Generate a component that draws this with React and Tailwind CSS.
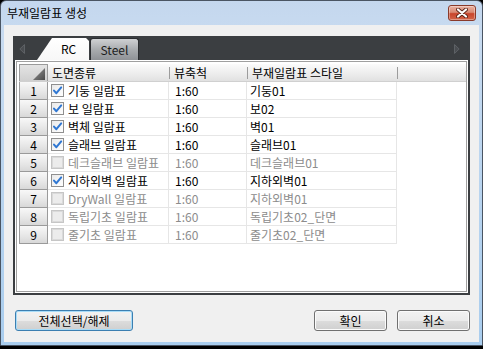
const rows = [
  { n: 1, on: true, name: '기둥 일람표', scale: '1:60', style: '기둥01' },
  { n: 2, on: true, name: '보 일람표', scale: '1:60', style: '보02' },
  { n: 3, on: true, name: '벽체 일람표', scale: '1:60', style: '벽01' },
  { n: 4, on: true, name: '슬래브 일람표', scale: '1:60', style: '슬래브01' },
  { n: 5, on: false, name: '데크슬래브 일람표', scale: '1:60', style: '데크슬래브01' },
  { n: 6, on: true, name: '지하외벽 일람표', scale: '1:60', style: '지하외벽01' },
  { n: 7, on: false, name: 'DryWall 일람표', scale: '1:60', style: '지하외벽01' },
  { n: 8, on: false, name: '독립기초 일람표', scale: '1:60', style: '독립기초02_단면' },
  { n: 9, on: false, name: '줄기초 일람표', scale: '1:60', style: '줄기초02_단면' },
];

function Check({ on }) {
  if (on) {
    return (
      <svg width="13" height="13" viewBox="0 0 13 13" className="shrink-0">
        <defs>
          <linearGradient id="cbg" x1="0" y1="0" x2="1" y2="1">
            <stop offset="0" stopColor="#e9e9e9" />
            <stop offset="1" stopColor="#ffffff" />
          </linearGradient>
        </defs>
        <rect x="0.5" y="0.5" width="12" height="12" fill="url(#cbg)" stroke="#8f8f8f" />
        <path d="M3 6.6 L5.4 9.2 L10.2 3.4" fill="none" stroke="#2f77d2" strokeWidth="2" strokeLinecap="round" strokeLinejoin="round" />
      </svg>
    );
  }
  return (
    <svg width="13" height="13" viewBox="0 0 13 13" className="shrink-0">
      <rect x="0.5" y="0.5" width="12" height="12" fill="#e6e6e6" stroke="#c6c6c6" />
      <rect x="1.5" y="1.5" width="10" height="10" fill="#ececec" stroke="#dadada" />
    </svg>
  );
}

function CloseButton() {
  return (
    <div className="w-[28px] h-[16px] rounded-[3px] border border-[#8a3a2a] bg-[linear-gradient(#eab2a3,#d98a74_45%,#c9442b_55%,#d2654a)] flex items-center justify-center shadow-[inset_0_0_0_1px_rgba(255,255,255,0.35)]">
      <svg width="12" height="10" viewBox="0 0 12 10">
        <path d="M2 1.5 L10 8.5 M10 1.5 L2 8.5" stroke="#5a2418" strokeWidth="4" strokeLinecap="round" />
        <path d="M2 1.5 L10 8.5 M10 1.5 L2 8.5" stroke="#ffffff" strokeWidth="2.2" strokeLinecap="round" />
      </svg>
    </div>
  );
}

function Button({ children, def, w }) {
  return (
    <div
      className={
        'h-[21px] rounded-[3px] border flex items-center justify-center text-[12px] leading-none text-black bg-[linear-gradient(#f2f2f2,#ebebeb_50%,#dddddd_50%,#cfcfcf)] ' +
        (def
          ? 'border-[#3c7fb1] shadow-[inset_0_0_0_1px_#a8dcf8]'
          : 'border-[#707070] shadow-[inset_0_0_0_1px_#fbfbfb]') +
        ' ' +
        w
      }
    >
      {children}
    </div>
  );
}

export default function App() {
  return (
    <div className="w-[483px] h-[349px] bg-black [font-family:'Noto_Sans_CJK_KR',sans-serif]">
      <div className="h-[346px] border border-[#4a5563] rounded-t-[6px] bg-[linear-gradient(#c4d7ee,#c8dbf0_10%,#a9cdee)] flex flex-col">
        {/* title bar */}
        <div className="h-[24px] shrink-0 flex items-center justify-between pl-[6px] pr-[6px]">
          <span className="text-[12px] leading-none text-black">부재일람표 생성</span>
          <CloseButton />
        </div>
        {/* client */}
        <div className="flex-1 mx-[3px] mb-[3px] bg-[#f0f0f0] flex flex-col pt-[11px] px-[9px]">
          {/* tab strip */}
          <div className="relative h-[24px] shrink-0 bg-[#3b3e41] flex items-end pl-[24px]">
            <svg className="absolute left-[6px] top-[8px]" width="6" height="10" viewBox="0 0 6 10">
              <path d="M5.5 0.5 L0.8 5 L5.5 9.5 Z" fill="#4a4d51" stroke="#5d6165" strokeWidth="1" />
            </svg>
            <svg className="absolute right-[10px] top-[8px]" width="6" height="10" viewBox="0 0 6 10">
              <path d="M0.5 0.5 L5.2 5 L0.5 9.5 Z" fill="#4a4d51" stroke="#5d6165" strokeWidth="1" />
            </svg>
            <div className="w-[52px] h-[22px] bg-[linear-gradient(#ffffff,#f7f7f7)] [clip-path:polygon(15px_0,49px_0,52px_3px,52px_100%,0_100%)] flex items-center pl-[24px] text-[12px] leading-none text-black">
              RC
            </div>
            <div className="ml-[1px] w-[49px] h-[22px] rounded-t-[3px] border border-b-0 border-[#2b2d30] bg-[linear-gradient(#cfd1d3,#a9acaf_50%,#8f9296)] flex items-center justify-center text-[12px] leading-none text-[#1c1c1c]">
              Steel
            </div>
          </div>
          {/* panel */}
          <div className="h-[235px] shrink-0 border-2 border-t-0 border-[#3b3e41] bg-white p-[1px]">
            <div className="h-full border border-[#a0a0a0] bg-white pl-[2px] pt-[2px] text-[12px] leading-none">
              {/* header */}
              <div className="h-[18px] flex bg-[linear-gradient(#fbfbfb,#ececec_60%,#e1e1e1)] border-b border-[#d0d0d0]">
                <div className="w-[29px] shrink-0 h-full border border-b-0 border-[#9a9a9a] bg-[linear-gradient(#e4e4e4,#cfcfcf)] relative">
                  <svg className="absolute right-[2px] bottom-[1px]" width="12" height="12" viewBox="0 0 12 12">
                    <defs>
                      <linearGradient id="tri" x1="0" y1="0" x2="1" y2="1">
                        <stop offset="0" stopColor="#9a9a9a" />
                        <stop offset="1" stopColor="#4a4a4a" />
                      </linearGradient>
                    </defs>
                    <path d="M12 0 L12 12 L0 12 Z" fill="url(#tri)" />
                  </svg>
                </div>
                <div className="w-[121px] shrink-0 flex items-center pl-[4px] text-black">도면종류</div>
                <div className="w-[78px] shrink-0 flex items-center">
                  <span className="w-[1px] h-[12px] bg-[#9c9c9c]" />
                  <span className="pl-[4px] text-black">뷰축척</span>
                </div>
                <div className="w-[150px] shrink-0 flex items-center">
                  <span className="w-[1px] h-[12px] bg-[#9c9c9c]" />
                  <span className="pl-[4px] text-black">부재일람표 스타일</span>
                </div>
                <div className="flex-1 flex items-center">
                  <span className="w-[1px] h-[12px] bg-[#9c9c9c]" />
                </div>
              </div>
              {/* rows */}
              {rows.map((r) => {
                const tc = r.on ? 'text-black' : 'text-[#8c8c8c]';
                return (
                  <div key={r.n} className="h-[18px] flex">
                    <div className="w-[29px] shrink-0 h-full border-x border-b border-[#9a9a9a] bg-[linear-gradient(#f8f8f8,#e6e6e6_60%,#d8d8d8)] flex items-center justify-center text-black">
                      {r.n}
                    </div>
                    <div className={'w-[121px] shrink-0 h-full border-r border-b border-[#e6e6e6] flex items-center pl-[3px] gap-[4px] whitespace-nowrap ' + tc}>
                      <Check on={r.on} />
                      <span>{r.name}</span>
                    </div>
                    <div className={'w-[78px] shrink-0 h-full border-r border-b border-[#e6e6e6] flex items-center pl-[6px] ' + tc}>
                      {r.scale}
                    </div>
                    <div className={'w-[150px] shrink-0 h-full border-r border-b border-[#e6e6e6] flex items-center pl-[3px] whitespace-nowrap ' + tc}>
                      {r.style}
                    </div>
                  </div>
                );
              })}
            </div>
          </div>
          {/* buttons */}
          <div className="mt-[15px] flex items-center">
            <div className="ml-[2px]">
              <Button def w="w-[118px]">전체선택/해제</Button>
            </div>
            <div className="ml-auto flex gap-[10px]">
              <Button w="w-[73px]">확인</Button>
              <Button w="w-[73px]">취소</Button>
            </div>
          </div>
        </div>
      </div>
    </div>
  );
}
